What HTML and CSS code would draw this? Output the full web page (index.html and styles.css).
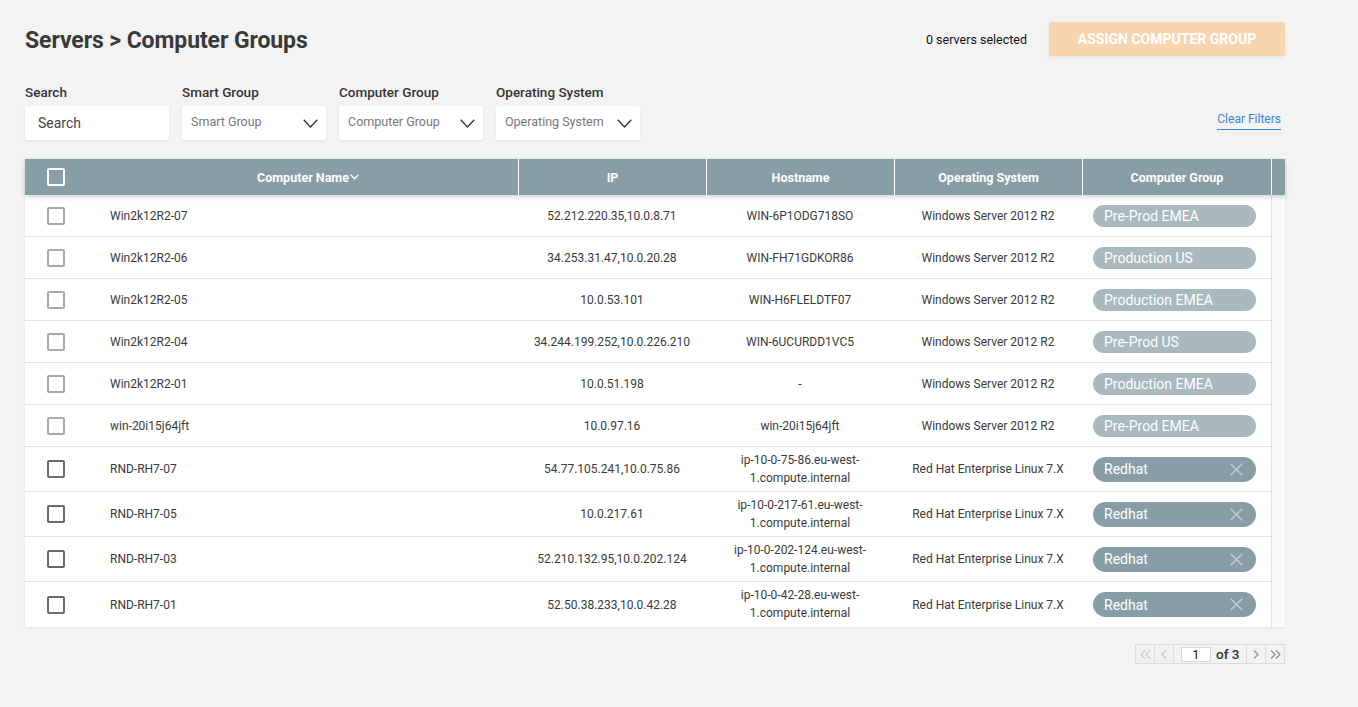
FILE: index.html
```html
<!DOCTYPE html>
<html lang="en">
<head>
<meta charset="utf-8">
<title>Servers &gt; Computer Groups</title>
<link rel="stylesheet" href="styles.css">
</head>
<body>
<div class="page">
  <div class="topbar">
    <h1 class="title">Servers &gt; Computer Groups</h1>
    <div class="actions">
      <span class="selected">0 servers selected</span>
      <button class="assign" type="button">ASSIGN COMPUTER GROUP</button>
    </div>
  </div>

  <div class="filters">
    <div class="filter-group">
      <div class="filter">
        <label class="flabel">Search</label>
        <div class="field search">Search</div>
      </div>
      <div class="filter">
        <label class="flabel">Smart Group</label>
        <div class="field select"><span>Smart Group</span><svg class="chev" width="15" height="9" viewBox="0 0 15 9"><path d="M0.7 0.7 L7.5 8 L14.3 0.7" fill="none" stroke="#333" stroke-width="1.3"/></svg></div>
      </div>
      <div class="filter">
        <label class="flabel">Computer Group</label>
        <div class="field select"><span>Computer Group</span><svg class="chev" width="15" height="9" viewBox="0 0 15 9"><path d="M0.7 0.7 L7.5 8 L14.3 0.7" fill="none" stroke="#333" stroke-width="1.3"/></svg></div>
      </div>
      <div class="filter">
        <label class="flabel">Operating System</label>
        <div class="field select"><span>Operating System</span><svg class="chev" width="15" height="9" viewBox="0 0 15 9"><path d="M0.7 0.7 L7.5 8 L14.3 0.7" fill="none" stroke="#333" stroke-width="1.3"/></svg></div>
      </div>
    </div>
    <a class="clear" href="#">Clear Filters</a>
  </div>

  <div class="grid">
    <div class="row head">
      <div class="cell cb"><span class="box white"></span></div>
      <div class="cell hc">Computer Name<svg class="sort" width="9" height="6" viewBox="0 0 9 6"><path d="M0.7 0.8 L4.5 4.8 L8.3 0.8" fill="none" stroke="#fff" stroke-width="1.3"/></svg></div>
      <div class="cell hc sep">IP</div>
      <div class="cell hc sep">Hostname</div>
      <div class="cell hc sep">Operating System</div>
      <div class="cell hc sep">Computer Group</div>
      <div class="cell gutter sep"></div>
    </div>

    <div class="row">
      <div class="cell cb"><span class="box light"></span></div>
      <div class="cell name">Win2k12R2-07</div>
      <div class="cell c">52.212.220.35,10.0.8.71</div>
      <div class="cell c">WIN-6P1ODG718SO</div>
      <div class="cell c">Windows Server 2012 R2</div>
      <div class="cell grp"><span class="pill soft">Pre-Prod EMEA</span></div>
      <div class="cell gutter"></div>
    </div>
    <div class="row">
      <div class="cell cb"><span class="box light"></span></div>
      <div class="cell name">Win2k12R2-06</div>
      <div class="cell c">34.253.31.47,10.0.20.28</div>
      <div class="cell c">WIN-FH71GDKOR86</div>
      <div class="cell c">Windows Server 2012 R2</div>
      <div class="cell grp"><span class="pill soft">Production US</span></div>
      <div class="cell gutter"></div>
    </div>
    <div class="row">
      <div class="cell cb"><span class="box light"></span></div>
      <div class="cell name">Win2k12R2-05</div>
      <div class="cell c">10.0.53.101</div>
      <div class="cell c">WIN-H6FLELDTF07</div>
      <div class="cell c">Windows Server 2012 R2</div>
      <div class="cell grp"><span class="pill soft">Production EMEA</span></div>
      <div class="cell gutter"></div>
    </div>
    <div class="row">
      <div class="cell cb"><span class="box light"></span></div>
      <div class="cell name">Win2k12R2-04</div>
      <div class="cell c">34.244.199.252,10.0.226.210</div>
      <div class="cell c">WIN-6UCURDD1VC5</div>
      <div class="cell c">Windows Server 2012 R2</div>
      <div class="cell grp"><span class="pill soft">Pre-Prod US</span></div>
      <div class="cell gutter"></div>
    </div>
    <div class="row">
      <div class="cell cb"><span class="box light"></span></div>
      <div class="cell name">Win2k12R2-01</div>
      <div class="cell c">10.0.51.198</div>
      <div class="cell c">-</div>
      <div class="cell c">Windows Server 2012 R2</div>
      <div class="cell grp"><span class="pill soft">Production EMEA</span></div>
      <div class="cell gutter"></div>
    </div>
    <div class="row">
      <div class="cell cb"><span class="box light"></span></div>
      <div class="cell name">win-20i15j64jft</div>
      <div class="cell c">10.0.97.16</div>
      <div class="cell c">win-20i15j64jft</div>
      <div class="cell c">Windows Server 2012 R2</div>
      <div class="cell grp"><span class="pill soft">Pre-Prod EMEA</span></div>
      <div class="cell gutter"></div>
    </div>

    <div class="row tall">
      <div class="cell cb"><span class="box dark"></span></div>
      <div class="cell name">RND-RH7-07</div>
      <div class="cell c">54.77.105.241,10.0.75.86</div>
      <div class="cell c two">ip-10-0-75-86.eu-west-<br>1.compute.internal</div>
      <div class="cell c">Red Hat Enterprise Linux 7.X</div>
      <div class="cell grp"><span class="pill strong">Redhat<svg class="x" width="13" height="13" viewBox="0 0 13 13"><path d="M0.7 0.7 L12.3 12.3 M12.3 0.7 L0.7 12.3" stroke="#c3cfd3" stroke-width="1.4"/></svg></span></div>
      <div class="cell gutter"></div>
    </div>
    <div class="row tall">
      <div class="cell cb"><span class="box dark"></span></div>
      <div class="cell name">RND-RH7-05</div>
      <div class="cell c">10.0.217.61</div>
      <div class="cell c two">ip-10-0-217-61.eu-west-<br>1.compute.internal</div>
      <div class="cell c">Red Hat Enterprise Linux 7.X</div>
      <div class="cell grp"><span class="pill strong">Redhat<svg class="x" width="13" height="13" viewBox="0 0 13 13"><path d="M0.7 0.7 L12.3 12.3 M12.3 0.7 L0.7 12.3" stroke="#c3cfd3" stroke-width="1.4"/></svg></span></div>
      <div class="cell gutter"></div>
    </div>
    <div class="row tall">
      <div class="cell cb"><span class="box dark"></span></div>
      <div class="cell name">RND-RH7-03</div>
      <div class="cell c">52.210.132.95,10.0.202.124</div>
      <div class="cell c two">ip-10-0-202-124.eu-west-<br>1.compute.internal</div>
      <div class="cell c">Red Hat Enterprise Linux 7.X</div>
      <div class="cell grp"><span class="pill strong">Redhat<svg class="x" width="13" height="13" viewBox="0 0 13 13"><path d="M0.7 0.7 L12.3 12.3 M12.3 0.7 L0.7 12.3" stroke="#c3cfd3" stroke-width="1.4"/></svg></span></div>
      <div class="cell gutter"></div>
    </div>
    <div class="row tall last">
      <div class="cell cb"><span class="box dark"></span></div>
      <div class="cell name">RND-RH7-01</div>
      <div class="cell c">52.50.38.233,10.0.42.28</div>
      <div class="cell c two">ip-10-0-42-28.eu-west-<br>1.compute.internal</div>
      <div class="cell c">Red Hat Enterprise Linux 7.X</div>
      <div class="cell grp"><span class="pill strong">Redhat<svg class="x" width="13" height="13" viewBox="0 0 13 13"><path d="M0.7 0.7 L12.3 12.3 M12.3 0.7 L0.7 12.3" stroke="#c3cfd3" stroke-width="1.4"/></svg></span></div>
      <div class="cell gutter"></div>
    </div>
  </div>

  <div class="pager-wrap">
    <div class="pager">
      <span class="pbtn off"><svg width="11" height="9" viewBox="0 0 11 9"><path d="M5 0.5 L1 4.5 L5 8.5 M10 0.5 L6 4.5 L10 8.5" fill="none" stroke="#c8c8c8" stroke-width="1.1"/></svg></span>
      <span class="pbtn off"><svg width="6" height="9" viewBox="0 0 6 9"><path d="M5 0.5 L1 4.5 L5 8.5" fill="none" stroke="#c8c8c8" stroke-width="1.1"/></svg></span>
      <span class="pmid"><span class="pinput">1</span><span class="pof">of 3</span></span>
      <span class="pbtn"><svg width="6" height="9" viewBox="0 0 6 9"><path d="M1 0.5 L5 4.5 L1 8.5" fill="none" stroke="#8a8a8a" stroke-width="1.1"/></svg></span>
      <span class="pbtn"><svg width="11" height="9" viewBox="0 0 11 9"><path d="M1 0.5 L5 4.5 L1 8.5 M6 0.5 L10 4.5 L6 8.5" fill="none" stroke="#8a8a8a" stroke-width="1.1"/></svg></span>
    </div>
  </div>
</div>
</body>
</html>
```

FILE: styles.css
```css
* { box-sizing: border-box; }

html, body {
  margin: 0;
  padding: 0;
  background: #f3f3f3;
  font-family: Roboto, "Liberation Sans", Arial, sans-serif;
  color: #333;
}

.page {
  padding: 22px 73px 0 25px;
}

.topbar {
  display: flex;
  justify-content: space-between;
  align-items: center;
  height: 34px;
}

.title {
  margin: 0;
  font-size: 23px;
  font-weight: 700;
  color: #3a3a3a;
  letter-spacing: -0.1px;
  padding-top: 2px;
}

.actions {
  display: flex;
  align-items: center;
  gap: 22px;
}

.selected {
  font-size: 12.5px;
  color: #111;
}

.assign {
  width: 236px;
  height: 34px;
  border: none;
  border-radius: 2px;
  background: #f8d5ae;
  color: #fff;
  font-family: inherit;
  font-size: 14px;
  font-weight: 700;
  letter-spacing: 0;
  box-shadow: 0 2px 4px rgba(0,0,0,0.06);
  padding: 0;
}

.filters {
  display: flex;
  justify-content: space-between;
  align-items: flex-end;
  margin-top: 28px;
}

.filter-group {
  display: flex;
  gap: 13px;
}

.filter {
  display: flex;
  flex-direction: column;
}

.flabel {
  font-size: 13.5px;
  font-weight: 500;
  color: #333;
  line-height: 16px;
  margin-bottom: 6px;
}

.field {
  width: 144px;
  height: 34px;
  background: #fff;
  border-radius: 2px;
  box-shadow: 0 1px 3px rgba(0,0,0,0.08);
  display: flex;
  align-items: center;
}

.search {
  padding-left: 13px;
  font-size: 14px;
  color: #444;
}

.select {
  padding: 0 8px 0 9px;
  justify-content: space-between;
  font-size: 12.5px;
  color: #777;
}

.select span {
  margin-top: -3px;
  white-space: nowrap;
}

.chev {
  display: block;
  flex: none;
}

.clear {
  font-size: 12px;
  color: #3a86dc;
  text-decoration: none;
  border-bottom: 1px solid #3a86dc;
  padding-bottom: 3px;
  margin-right: 4px;
  margin-bottom: 10px;
}

.grid {
  margin-top: 19px;
  width: 1260px;
  background: #fff;
  box-shadow: 0 1px 3px rgba(0,0,0,0.06);
}

.row {
  display: grid;
  grid-template-columns: 73px 420px 188px 188px 188px 189px 14px;
  height: 42px;
  background: #fff;
}

.row.tall {
  height: 45px;
}

.cell {
  display: flex;
  align-items: center;
  font-size: 12px;
  color: #3a3a3a;
  border-bottom: 1px solid #e3e3e3;
  white-space: nowrap;
}

.row.last .cell {
  border-bottom: none;
}

.cell.gutter {
  background: #fafafa;
  border-bottom: none;
  border-left: 1px solid #e3e3e3;
}

.row.head {
  height: 36px;
  background: #879ea7;
  position: relative;
  z-index: 1;
  box-shadow: 0 2px 5px rgba(0,0,0,0.18);
}

.row.head .cell {
  border-bottom: none;
  color: #fff;
  font-weight: 700;
  font-size: 12.5px;
}

.row.head .cell.sep {
  border-left: 1px solid #fff;
}

.row.head .cell.gutter {
  background: #879ea7;
}

.hc {
  justify-content: center;
}

.sort {
  display: block;
  margin-left: 1px;
}

.cb {
  padding-left: 22px;
}

.box {
  display: block;
  width: 18px;
  height: 18px;
  border-radius: 2px;
  border: 2px solid #a8a8a8;
  background: #fff;
}

.box.white {
  border-color: #fff;
  background: transparent;
}

.box.dark {
  border-color: #6a6a6a;
}

.name {
  padding-left: 12px;
}

.c {
  justify-content: center;
  text-align: center;
}

.two {
  line-height: 18px;
  padding-bottom: 1px;
}

.grp {
  padding-left: 11px;
}

.pill {
  width: 163px;
  height: 22px;
  border-radius: 11px;
  display: flex;
  align-items: center;
  justify-content: space-between;
  padding: 0 13px 0 11px;
  color: #fff;
  font-size: 14px;
}

.pill.soft {
  background: #a9b9be;
}

.pill.strong {
  background: #879ea7;
  height: 25px;
  border-radius: 12.5px;
}

.x {
  display: block;
}

.pager-wrap {
  display: flex;
  justify-content: flex-end;
  margin-top: 17px;
}

.pager {
  display: flex;
  height: 20px;
  border: 1px solid #dcdcdc;
}

.pbtn {
  width: 19px;
  display: flex;
  align-items: center;
  justify-content: center;
  border-left: 1px solid #dcdcdc;
}

.pbtn:first-child {
  border-left: none;
  width: 18px;
}

.pbtn.off {
  background: #f1f1f1;
}

.pmid {
  width: 73px;
  display: flex;
  align-items: center;
  border-left: 1px solid #dcdcdc;
  padding-left: 7px;
  gap: 5px;
}

.pinput {
  width: 30px;
  height: 15px;
  background: #fff;
  border: 1px solid #d8d8d8;
  font-size: 13px;
  line-height: 13px;
  text-align: center;
  color: #222;
}

.pof {
  font-size: 13.5px;
  font-weight: 500;
  color: #333;
}
```
